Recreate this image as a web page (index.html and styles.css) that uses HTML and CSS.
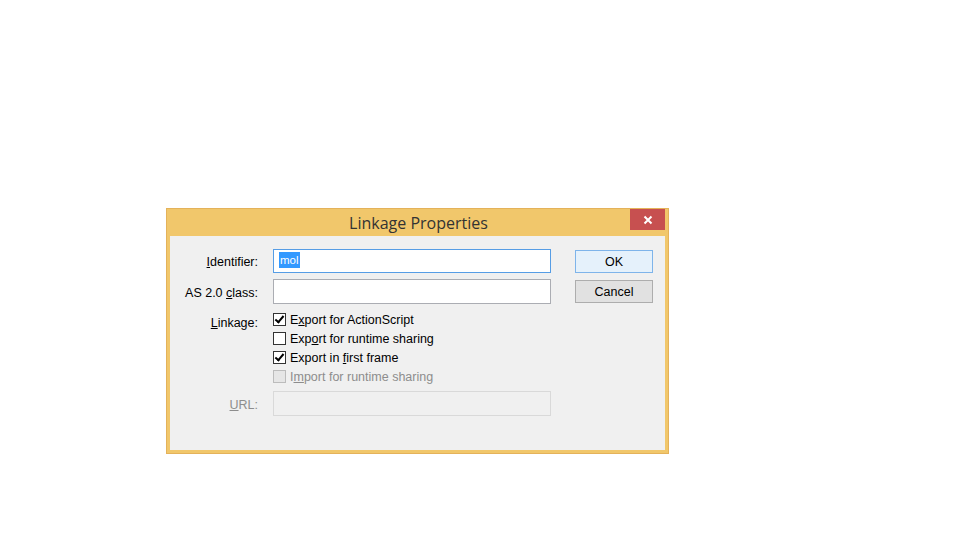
FILE: index.html
```html
<!DOCTYPE html>
<html lang="en">

<head>
    <meta charset="UTF-8">
    <title>Linkage Properties</title>
    <link rel="stylesheet" href="styles.css">
</head>

<body>
    <div class="dialog">
        <div class="titlebar">
            <span class="title">Linkage Properties</span>
            <span class="close">
                <svg width="10" height="10" viewBox="0 0 10 10">
                    <path d="M1.5 1.5 L8.5 8.5 M8.5 1.5 L1.5 8.5" stroke="#fff" stroke-width="2" />
                </svg>
            </span>
        </div>
        <div class="content">
            <div class="form">
                <label class="lbl"><u>I</u>dentifier:</label>
                <div class="field focused"><span class="sel">mol</span></div>

                <label class="lbl">AS 2.0 <u>c</u>lass:</label>
                <div class="field tall"></div>

                <label class="lbl lbl-top"><u>L</u>inkage:</label>
                <div class="checks">
                    <div class="check"><span class="box on"></span><span>E<u>x</u>port for ActionScript</span></div>
                    <div class="check"><span class="box"></span><span>Exp<u>o</u>rt for runtime sharing</span></div>
                    <div class="check"><span class="box on"></span><span>Export in <u>f</u>irst frame</span></div>
                    <div class="check disabled"><span class="box"></span><span>I<u>m</u>port for runtime sharing</span></div>
                </div>

                <label class="lbl disabled-text"><u>U</u>RL:</label>
                <div class="field off tall"></div>
            </div>
            <div class="buttons">
                <button class="btn default">OK</button>
                <button class="btn">Cancel</button>
            </div>
        </div>
    </div>
</body>

</html>
```

FILE: styles.css
```css
body {
    margin: 0;
    background: #fff;
    font-family: "Liberation Sans", Arial, sans-serif;
    font-size: 12.5px;
    color: #000;
}

.dialog {
    margin: 208px 0 0 166px;
    width: 503px;
    height: 246px;
    box-sizing: border-box;
    background: #f1c76b;
    border: 1px solid #e4b25a;
    padding: 0 3px 3px 3px;
    display: flex;
    flex-direction: column;
}

.titlebar {
    height: 27px;
    position: relative;
    display: flex;
    justify-content: center;
    align-items: center;
}

.title {
    font-family: "Open Sans", sans-serif;
    font-size: 16px;
    color: #333;
    margin-top: 1px;
    margin-left: 2px;
}

.close {
    position: absolute;
    right: 0;
    top: 0;
    width: 35px;
    height: 21px;
    background: #c75050;
    display: flex;
    align-items: center;
    justify-content: center;
}

.content {
    flex: 1;
    background: #f0f0f0;
    display: flex;
    padding: 13px 12px 0 0;
}

.form {
    display: grid;
    grid-template-columns: 88px 278px;
    column-gap: 15px;
    row-gap: 6px;
    align-content: start;
}

.lbl {
    text-align: right;
    align-self: center;
    color: #000;
    margin-top: 2px;
}

.lbl-top {
    align-self: start;
    margin-top: 6px;
}

.disabled-text {
    color: #8d8d8d;
}

.field {
    height: 24px;
    box-sizing: border-box;
    border: 1px solid #abadb3;
    background: #fff;
    padding: 2px 5px;
}

.field.tall {
    height: 25px;
}

.field.focused {
    border-color: #569de5;
}

.field.off {
    background: #f0f0f0;
    border-color: #d9d9d9;
}

.sel {
    display: inline-block;
    background: #3399ff;
    color: #fff;
    padding: 1px 1px 1px 1px;
    line-height: 14px;
    margin-top: 0;
    font-size: 11.5px;
}

.checks {
    display: flex;
    flex-direction: column;
    gap: 6px;
    padding-top: 3px;
    padding-bottom: 2px;
}

.check {
    display: flex;
    align-items: center;
    gap: 4px;
    height: 13px;
}

.box {
    width: 13px;
    height: 13px;
    box-sizing: border-box;
    border: 1px solid #333;
    background: #fff;
    position: relative;
}

.box.on::after {
    content: '';
    position: absolute;
    left: 3px;
    top: 0px;
    width: 3px;
    height: 7px;
    border-right: 2px solid #000;
    border-bottom: 2px solid #000;
    transform: rotate(40deg);
}

.check.disabled {
    color: #8d8d8d;
}

.check.disabled .box {
    border-color: #bcbcbc;
    background: #e6e6e6;
}

.buttons {
    margin-left: 24px;
    display: flex;
    flex-direction: column;
    gap: 7px;
    padding-top: 1px;
}

.btn {
    width: 78px;
    height: 23px;
    font-family: "Liberation Sans", Arial, sans-serif;
    font-size: 12.5px;
    background: #e1e1e1;
    border: 1px solid #adadad;
    color: #000;
    padding: 0;
}

.btn.default {
    background: #e5f1fb;
    border-color: #7eb4ea;
}
```
